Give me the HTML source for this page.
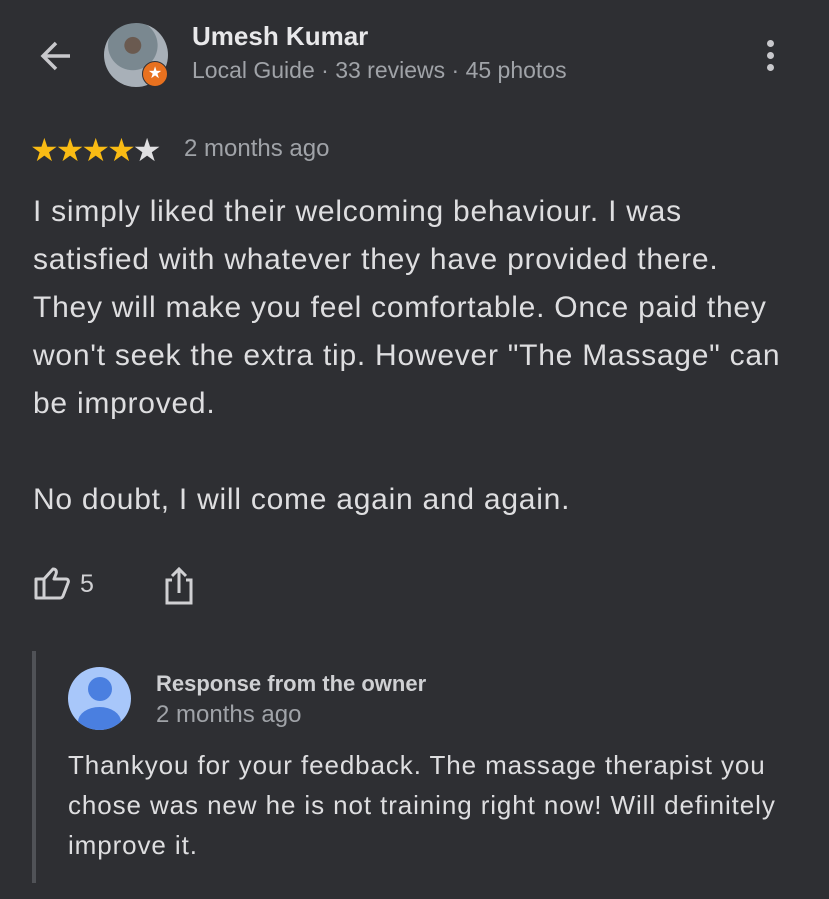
<!DOCTYPE html>
<html><head><meta charset="utf-8"><style>
body{margin:0;width:829px;height:899px;background:#2e2f33;font-family:"Liberation Sans",sans-serif;position:relative;overflow:hidden;color:#e2e2e4}
.a{position:absolute;white-space:nowrap}
</style></head><body>
<svg class="a" style="left:38px;top:38px" width="36" height="36" viewBox="0 0 36 36"><path d="M32 18H6M18 5L5 18l13 13" stroke="#c8c8cc" stroke-width="3.5" fill="none"/></svg>
<div class="a" style="left:104px;top:23px;width:64px;height:64px;border-radius:50%;background:radial-gradient(circle at 45% 35%,#6a5a50 0 15%,#7a8890 16% 45%,#a8b0b8 46%);"></div>
<div class="a" style="left:142px;top:61px;width:24px;height:24px;border-radius:50%;background:#e8711f;border:1px solid #2e2f33;color:#fff;font-size:16px;text-align:center;line-height:24px">★</div>
<div class="a" style="left:192px;top:21px;font-size:26px;font-weight:bold;color:#e8e8ea">Umesh Kumar</div>
<div class="a" style="left:192px;top:57px;font-size:23px;color:#a0a3a8">Local Guide · 33 reviews · 45 photos</div>
<div class="a" style="left:767px;top:40px"><div style="width:7px;height:7px;border-radius:50%;background:#c8c8cc;margin-bottom:5px"></div><div style="width:7px;height:7px;border-radius:50%;background:#c8c8cc;margin-bottom:5px"></div><div style="width:7px;height:7px;border-radius:50%;background:#c8c8cc"></div></div>
<div class="a" style="left:30px;top:131px;font-size:32px;letter-spacing:-3px;color:#f9bb14">★★★★<span style="color:#e0e0e2">★</span></div>
<div class="a" style="left:184px;top:135px;font-size:24px;color:#a0a3a8">2 months ago</div>
<div class="a" style="left:33px;top:188px;font-size:30px;letter-spacing:0.75px;line-height:48px;color:#dedee0">I simply liked their welcoming behaviour. I was<br>satisfied with whatever they have provided there.<br>They will make you feel comfortable. Once paid they<br>won't seek the extra tip. However "The Massage" can<br>be improved.<br><br>No doubt, I will come again and again.</div>
<svg class="a" style="left:34px;top:566px" width="38" height="36" viewBox="0 0 38 36"><path d="M2 13h8v19H2zM10 13l9-10c3 0 4 2 3 5l-2 5h12c2 0 3 2 2 4l-5 13c-1 2-2 2-3 2H10" stroke="#d0d0d3" stroke-width="3" fill="none" stroke-linejoin="round"/></svg>
<div class="a" style="left:80px;top:570px;font-size:25px;color:#d0d0d3">5</div>
<svg class="a" style="left:164px;top:566px" width="30" height="40" viewBox="0 0 30 40"><path d="M8 14H3v23h24V14h-5M15 27V4M8 10l7-7 7 7" stroke="#d0d0d3" stroke-width="3" fill="none"/></svg>
<div class="a" style="left:32px;top:651px;width:4px;height:232px;background:#505257"></div>
<div class="a" style="left:68px;top:667px;width:63px;height:63px;border-radius:50%;background:#a8c7fa;overflow:hidden"><div style="position:absolute;left:20px;top:10px;width:24px;height:24px;border-radius:50%;background:#4a7fe0"></div><div style="position:absolute;left:10px;top:40px;width:43px;height:30px;border-radius:50%;background:#4a7fe0"></div></div>
<div class="a" style="left:156px;top:671px;font-size:22px;font-weight:bold;color:#cfd0d3">Response from the owner</div>
<div class="a" style="left:156px;top:701px;font-size:24px;color:#a0a3a8">2 months ago</div>
<div class="a" style="left:68px;top:745px;font-size:26px;letter-spacing:0.9px;line-height:40px;color:#dedee0">Thankyou for your feedback. The massage therapist you<br>chose was new he is not training right now! Will definitely<br>improve it.</div>
</body></html>
